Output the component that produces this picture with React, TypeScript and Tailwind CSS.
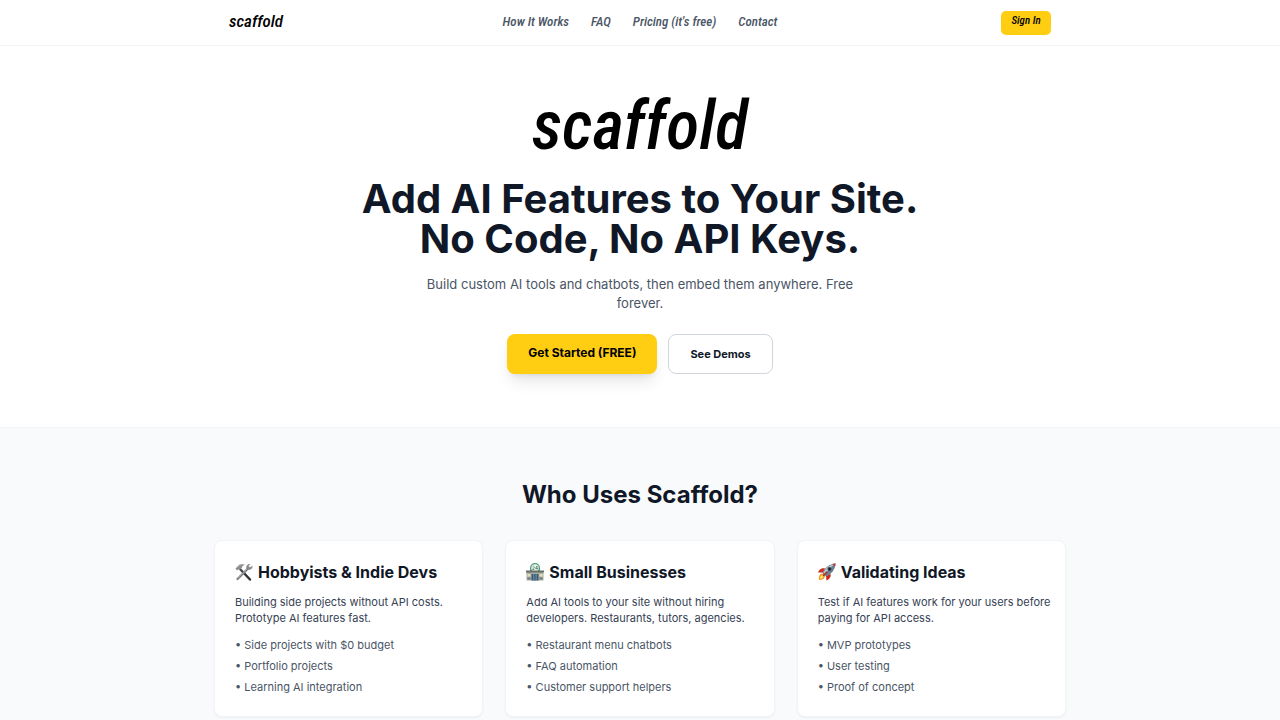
const navLinks = [
    { label: 'How It Works', href: '#how-it-works' },
    { label: 'FAQ', href: '#faq' },
    { label: "Pricing (it's free)", href: '#pricing' },
    { label: 'Contact', href: '#contact' },
];

const audiences = [
    {
        icon: <ToolsIcon />,
        title: 'Hobbyists & Indie Devs',
        text: 'Building side projects without API costs. Prototype AI features fast.',
        items: ['Side projects with $0 budget', 'Portfolio projects', 'Learning AI integration'],
    },
    {
        icon: <StoreIcon />,
        title: 'Small Businesses',
        text: 'Add AI tools to your site without hiring developers. Restaurants, tutors, agencies.',
        items: ['Restaurant menu chatbots', 'FAQ automation', 'Customer support helpers'],
    },
    {
        icon: <RocketIcon />,
        title: 'Validating Ideas',
        text: 'Test if AI features work for your users before paying for API access.',
        items: ['MVP prototypes', 'User testing', 'Proof of concept'],
    },
];

function ToolsIcon() {
    return (
        <svg viewBox="0 0 36 36" className="size-[18px]" aria-hidden="true">
            <path d="M9 11 L30 33" stroke="#4b4b4b" strokeWidth="5" strokeLinecap="round" />
            <path d="M18 20 L30 33" stroke="#2f2f2f" strokeWidth="3" strokeLinecap="round" />
            <path d="M1 11 L5 7 C9 1 15 1 20 3 L15 6 L14 9 L9 14 L7 12 L4 15 Z" fill="#8b8d8d" />
            <path d="M5 8 C9 3 14 2 18 3" stroke="#c2c4c4" strokeWidth="1.5" fill="none" />
            <path d="M5 32 L26 11" stroke="#777b7d" strokeWidth="4.5" strokeLinecap="round" />
            <path d="M6 30 L25 11" stroke="#b9bdbf" strokeWidth="1.5" strokeLinecap="round" />
            <path d="M23 12 C21 6 25 1 31 2 L27 6 L30 9 L35 5 C36 11 31 15 26 13 Z" fill="#85898b" />
        </svg>
    );
}

function StoreIcon() {
    return (
        <svg viewBox="0 0 36 36" className="size-[18px]" aria-hidden="true">
            <path d="M8 16 V10 A10 10 0 0 1 28 10 V16 Z" fill="#4d9b7d" />
            <circle cx="18" cy="10" r="7.5" fill="#eef5ed" />
            <path d="M13 8 Q15 5 17 8 L13 13 H17 M22 13 V6 L19 11 H24" stroke="#4a7563" strokeWidth="1.4" fill="none" />
            <path d="M1 16 H35 V35 H1 Z" fill="#a9aca0" />
            <path d="M0 15 H36 V19 H0 Z" fill="#667069" />
            <path d="M3 22 H9 V27 H3 Z M27 22 H33 V27 H27 Z" fill="#e5dfb9" />
            <path d="M3 29 H9 V33 H3 Z M27 29 H33 V33 H27 Z" fill="#727c7c" />
            <path d="M11 22 H25 V35 H11 Z" fill="#385b79" />
            <path d="M15 22 V35 M18 22 V35 M21 22 V35" stroke="#88a8bb" strokeWidth="1" />
        </svg>
    );
}

function RocketIcon() {
    return (
        <svg viewBox="0 0 36 36" className="size-[18px]" aria-hidden="true">
            <path d="M10 21 C4 20 1 26 2 34 C9 34 14 31 14 25 Z" fill="#f39a1f" />
            <path d="M9 24 C5 25 4 28 4 32 C8 31 11 29 11 26 Z" fill="#ffe36a" />
            <path d="M14 11 C7 9 2 13 0 19 L10 19 Z" fill="#cf2d22" />
            <path d="M25 22 C27 27 22 33 17 35 L16 25 Z" fill="#c92820" />
            <path d="M9 20 C13 9 23 2 35 1 C35 12 27 22 16 27 Z" fill="#697e8e" />
            <path d="M11 19 C15 10 23 4 32 3 C27 8 20 15 14 23 Z" fill="#b3c4ce" />
            <path d="M29 2 C31 1 33 1 35 1 C35 3 35 5 34 7 Z" fill="#d63a2d" />
            <circle cx="23" cy="12" r="4" fill="#344350" />
            <circle cx="23" cy="12" r="2" fill="#121c29" />
            <path d="M11 25 L18 18" stroke="#b42621" strokeWidth="3" strokeLinecap="round" />
        </svg>
    );
}

function Header() {
    return (
        <header className="border-b border-gray-100 bg-white font-['Roboto_Condensed','Open_Sans_Condensed',cursive] italic">
            <div className="mx-auto flex h-[45px] max-w-[852px] items-center justify-between px-[15px]">
                <a href="#" className="flex-1 pb-1 text-[17px] leading-5 font-medium text-black">scaffold</a>
                <nav className="flex gap-[22px] pb-[2px]">
                    {navLinks.map((link) => (
                        <a key={link.label} href={link.href} className="text-[13px] leading-5 font-medium text-gray-600">
                            {link.label}
                        </a>
                    ))}
                </nav>
                <div className="flex flex-1 justify-end">
                    <button className="h-6 w-[50px] rounded-[5px] bg-[#ffcd12] pb-0.5 text-[11px] font-medium text-black italic">
                        Sign In
                    </button>
                </div>
            </div>
        </header>
    );
}

function Hero() {
    return (
        <section className="flex flex-col items-center px-4 pt-10 pb-[53px] text-center">
            <p className="font-['Roboto_Condensed','Open_Sans_Condensed',cursive] text-[68px] leading-[80px] font-medium text-black italic">
                scaffold
            </p>
            <h1 className="mt-[13px] text-[40px] leading-10 font-bold text-gray-900">
                Add AI Features to Your Site.
                <br />
                No Code, No API Keys.
            </h1>
            <p className="mt-4 max-w-[460px] text-[13px] leading-[19px] text-gray-600">
                Build custom AI tools and chatbots, then embed them anywhere. Free forever.
            </p>
            <div className="mt-[21px] flex gap-[11px]">
                <button className="h-10 rounded-lg bg-[#ffcd12] px-[21px] pb-0.5 text-[12px] font-bold text-black shadow-lg shadow-black/10">
                    Get Started (FREE)
                </button>
                <button className="h-10 rounded-lg border border-gray-300 bg-white px-[21px] text-[11px] font-bold text-gray-900">
                    See Demos
                </button>
            </div>
        </section>
    );
}

function AudienceCard({ icon, title, text, items }: (typeof audiences)[number]) {
    return (
        <article className="rounded-lg border border-gray-100 bg-white pt-[19px] pr-3 pb-[21px] pl-5 shadow-xs">
            <h3 className="flex items-center gap-[5px] text-[16px] leading-6 font-bold text-gray-900">
                {icon}
                {title}
            </h3>
            <p className="mt-[10px] text-[11px] leading-4 text-gray-700">{text}</p>
            <ul className="mt-[11px] flex flex-col gap-[5px] text-[11px] leading-4 text-gray-600">
                {items.map((item) => (
                    <li key={item}>• {item}</li>
                ))}
            </ul>
        </article>
    );
}

export default function App() {
    return (
        <div className="h-screen overflow-y-auto bg-white font-[Inter,sans-serif] [scrollbar-width:none]">
            <Header />
            <main>
                <Hero />
                <section className="border-t border-gray-100 bg-gray-50 px-4 pt-[51px] pb-14">
                    <h2 className="text-center text-[24px] leading-8 font-bold text-gray-900">Who Uses Scaffold?</h2>
                    <div className="mx-auto mt-[29px] grid max-w-[852px] grid-cols-3 gap-[22px]">
                        {audiences.map((audience) => (
                            <AudienceCard key={audience.title} {...audience} />
                        ))}
                    </div>
                </section>
            </main>
        </div>
    );
}
